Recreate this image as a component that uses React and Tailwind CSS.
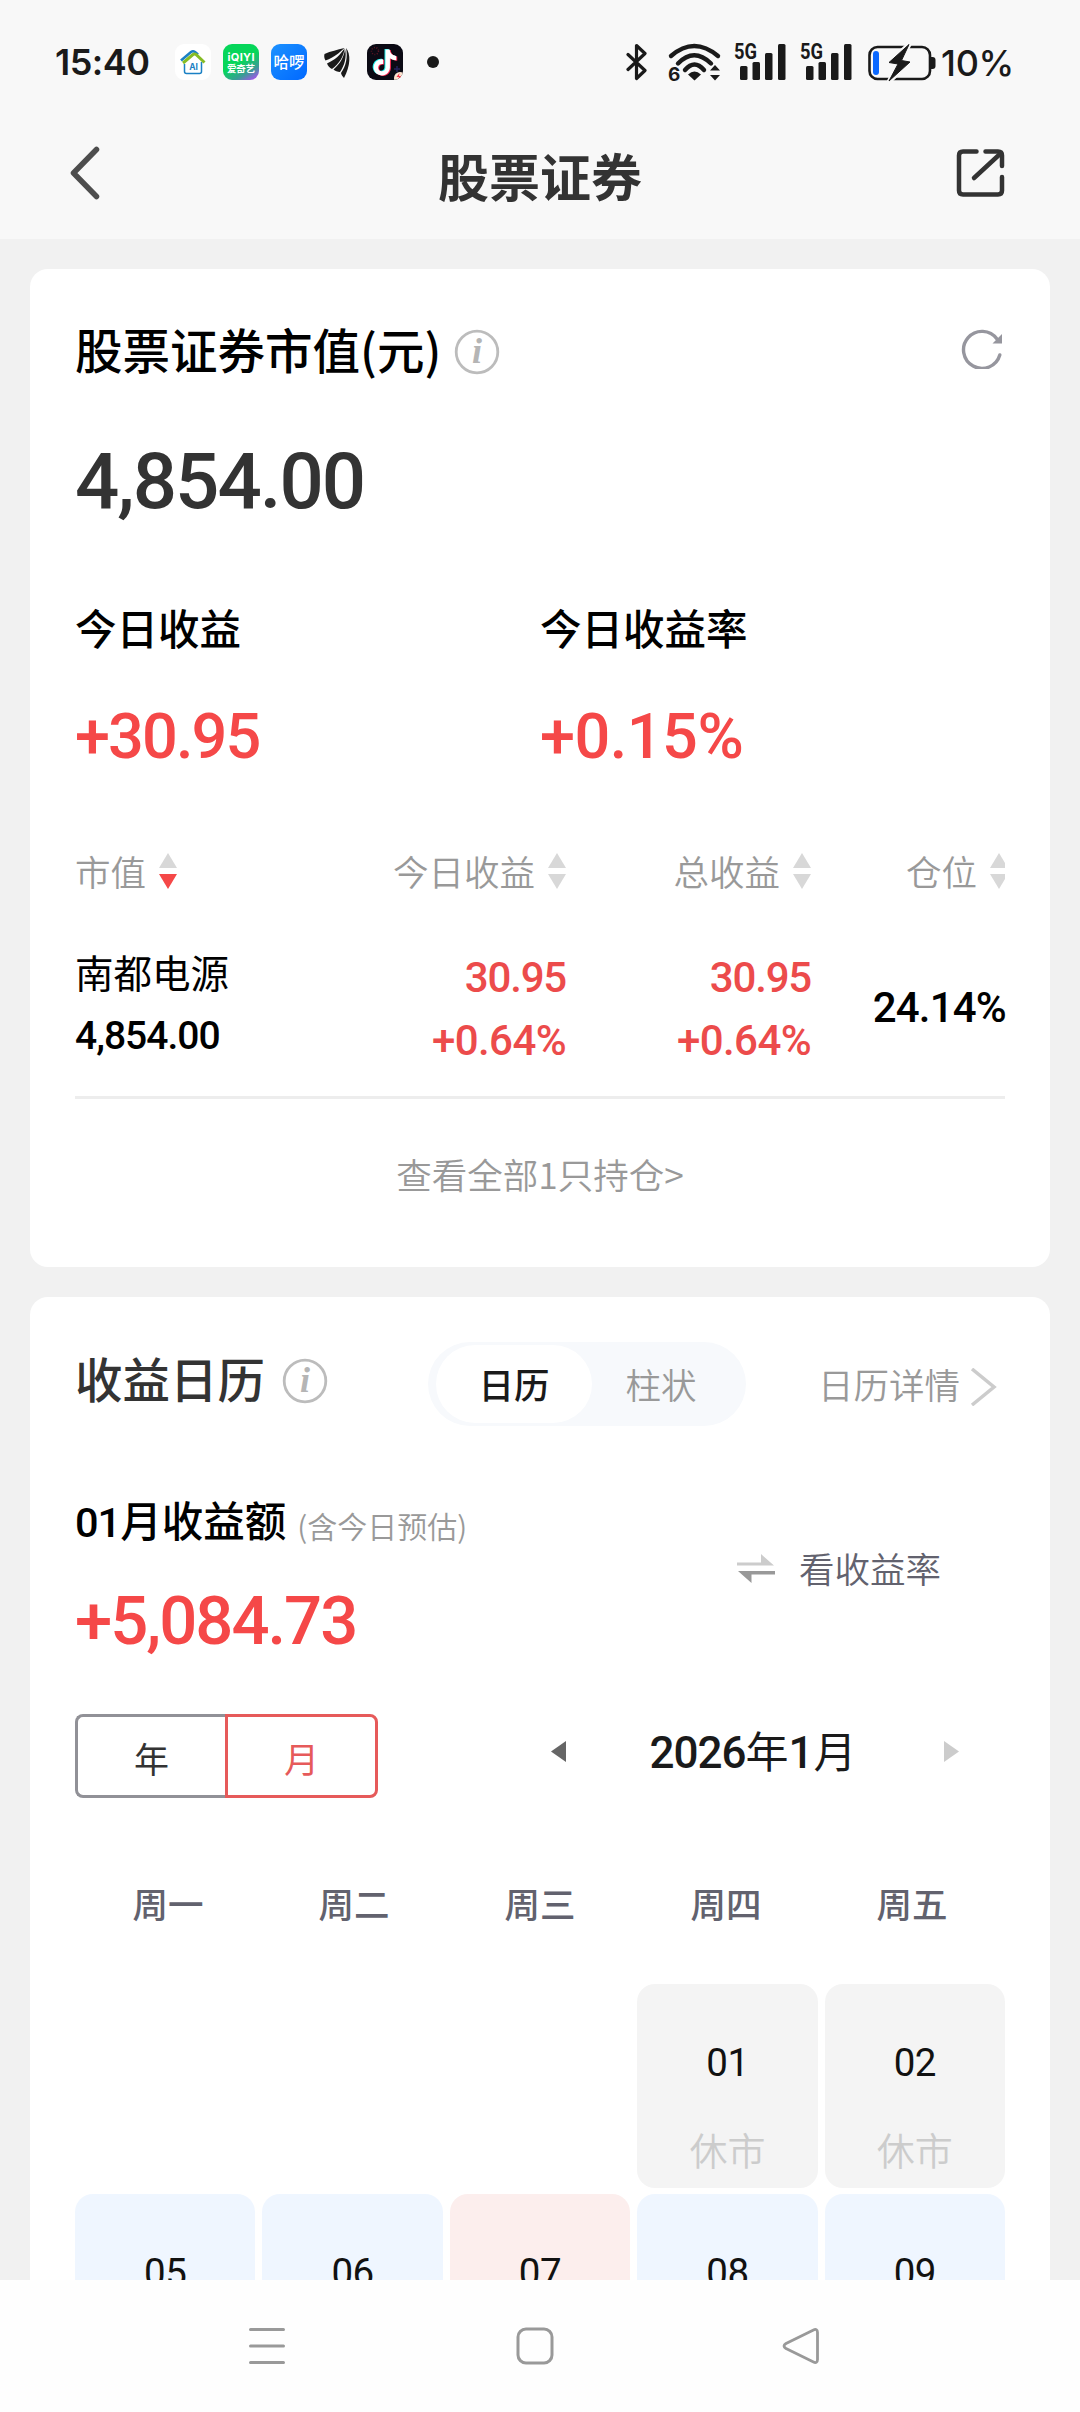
import React, { useState } from 'react';

const weekdays = ['周一', '周二', '周三', '周四', '周五'];

const days = [
  { day: null },
  { day: null },
  { day: null },
  { day: '01', type: 'closed' },
  { day: '02', type: 'closed' },
  { day: '05', type: 'loss' },
  { day: '06', type: 'loss' },
  { day: '07', type: 'gain' },
  { day: '08', type: 'loss' },
  { day: '09', type: 'loss' },
];

const dayColors = {
  closed: 'bg-[#f4f4f4]',
  loss: 'bg-[#eff6ff]',
  gain: 'bg-[#fceeed]',
};

const num = "font-['Roboto','Noto_Sans_CJK_SC',sans-serif]";

const InfoIcon = () => (
  <svg className="h-[46px] w-[46px] shrink-0 overflow-visible" viewBox="0 0 46 46">
    <circle cx="23" cy="23" r="20.8" fill="none" stroke="#bcbcbc" strokeWidth="2.8" />
    <text x="23" y="34" textAnchor="middle" fontFamily="Liberation Serif, serif" fontStyle="italic" fontWeight="bold" fontSize="36" fill="#b5b5b5">i</text>
  </svg>
);

const SortIcon = ({ active, clipped }) => (
  <div className={clipped ? 'w-[15px] overflow-hidden' : 'w-[18px]'}>
    <svg className="h-[36px] w-[18px] max-w-none" viewBox="0 0 18 36">
      <path d="M9 0l9 15H0z" fill="#d8d8d8" />
      <path d="M0 21h18L9 36z" fill={active ? '#f54848' : '#d8d8d8'} />
    </svg>
  </div>
);

const SignalIcon = () => (
  <svg className="h-[40px] w-[52px] overflow-visible" viewBox="0 0 52 40" fill="#1a1a1a">
    <text x="0" y="17" fontFamily="Roboto, sans-serif" fontWeight="bold" fontSize="22" textLength="23" lengthAdjust="spacingAndGlyphs">5G</text>
    <rect x="6" y="24" width="7.5" height="14" rx="1.5" />
    <rect x="18.5" y="20" width="7.5" height="18" rx="1.5" />
    <rect x="31" y="11" width="7.5" height="27" rx="1.5" />
    <rect x="44" y="2" width="7.5" height="36" rx="1.5" />
  </svg>
);

const TIKTOK_PATH =
  'M12.525.02c1.31-.02 2.61-.01 3.91-.02.08 1.53.63 3.09 1.75 4.17 1.12 1.11 2.7 1.62 4.24 1.79v4.03c-1.44-.05-2.89-.35-4.2-.97-.57-.26-1.1-.59-1.62-.93-.01 2.92.01 5.84-.02 8.75-.08 1.4-.54 2.79-1.35 3.94-1.31 1.92-3.58 3.17-5.91 3.21-1.43.08-2.86-.31-4.08-1.03-2.02-1.19-3.44-3.37-3.65-5.71-.02-.5-.03-1-.01-1.49.18-1.9 1.12-3.72 2.58-4.96 1.66-1.44 3.98-2.13 6.15-1.72.02 1.48-.04 2.96-.04 4.44-.99-.32-2.15-.23-3.02.37-.63.41-1.11 1.04-1.36 1.75-.21.51-.15 1.07-.14 1.61.24 1.64 1.82 3.02 3.5 2.87 1.12-.01 2.19-.66 2.77-1.61.19-.33.4-.67.41-1.06.1-1.79.06-3.57.07-5.36.01-4.03-.01-8.05.02-12.07z';

const StatusBar = () => (
  <div className="flex h-[124px] items-center justify-between pr-[66px] pl-[55px] text-[#1a1a1a]">
    <div className="flex items-center gap-3">
      <span className="w-[108px] font-['Inter',sans-serif] text-[36px] leading-none font-semibold tracking-[-0.5px]">15:40</span>

      {/* home AI */}
      <svg className="h-9 w-9 overflow-visible" viewBox="0 0 36 36">
        <rect width="36" height="36" rx="9" fill="#fff" />
        <path d="M9.5 20v7.5q0 2 2 2h13q2 0 2-2V18" fill="none" stroke="#1a80c4" strokeWidth="1.5" />
        <path d="M6 16.5L16 8q2-1.5 4 0l3 2.5" fill="none" stroke="#1a80c4" strokeWidth="2.6" />
        <path d="M8 19l10-8.5q1.5-1 3 0l8.5 8" fill="none" stroke="#86bc25" strokeWidth="3" />
        <text x="18.5" y="26" textAnchor="middle" fontFamily="Inter, sans-serif" fontWeight="bold" fontSize="8.5" fill="#1a80c4">AI</text>
      </svg>

      {/* iQIYI */}
      <svg className="h-9 w-9 overflow-visible" viewBox="0 0 36 36">
        <defs>
          <linearGradient id="iqiyi" x1="0.3" y1="0" x2="0.9" y2="1">
            <stop offset="0.45" stopColor="#06d65a" />
            <stop offset="0.75" stopColor="#3a9c96" />
            <stop offset="1" stopColor="#b04bf5" />
          </linearGradient>
        </defs>
        <rect width="36" height="36" rx="9" fill="url(#iqiyi)" />
        <text x="18" y="17" textAnchor="middle" fontFamily="Inter, sans-serif" fontWeight="bold" fontSize="11" textLength="27" fill="#fff">iQIYI</text>
        <text x="18" y="28" textAnchor="middle" fontFamily="Noto Sans CJK SC, sans-serif" fontWeight="bold" fontSize="9.5" textLength="28" fill="#fff">爱奇艺</text>
      </svg>

      {/* Hello */}
      <svg className="h-9 w-9 overflow-visible" viewBox="0 0 36 36">
        <defs>
          <linearGradient id="hello" x1="0" y1="0" x2="1" y2="1">
            <stop offset="0" stopColor="#1c92ff" />
            <stop offset="1" stopColor="#0068ff" />
          </linearGradient>
        </defs>
        <rect width="36" height="36" rx="9" fill="url(#hello)" />
        <text x="18" y="24" textAnchor="middle" fontFamily="Noto Sans CJK SC, sans-serif" fontWeight="500" fontSize="15.5" fill="#fff">哈啰</text>
      </svg>

      {/* wing */}
      <svg className="h-9 w-9" viewBox="0 0 36 36" fill="#1a1a1a">
        <path d="M5.5 10C12 7 18 6 25.500 4 20 9 16 13 6.500 16.500 5 14 5 12 5.500 10z" />
        <path d="M8 19.500C16 16 21 11 25.500 4.500 25 12 20 20 13 25 10.500 24 9 22 8 19.500z" />
        <path d="M14.500 25.500C21 20 25 13 26 5c2 7-.5 17-5 23-2.500 0-5-1-6.500-2.500z" />
        <path d="M22 29C27 22 29 13 27 4c5 6 4.500 18-2 30-1.500-1.500-2.500-3-3-5z" />
      </svg>

      {/* TikTok */}
      <svg className="h-9 w-9" viewBox="0 0 36 36">
        <defs>
          <clipPath id="tile"><rect width="36" height="36" rx="9" /></clipPath>
        </defs>
        <g clipPath="url(#tile)">
          <rect width="36" height="36" fill="#0b0a14" />
          <circle cx="8" cy="7" r="3.5" fill="none" stroke="#5c1523" strokeWidth="1.5" strokeDasharray="1 1.5" />
          <path d="M27 25h6M30 22v6" stroke="#25235c" strokeWidth="1.5" />
          <path d={TIKTOK_PATH} transform="translate(4 5) scale(1.08)" fill="#25f4ee" />
          <path d={TIKTOK_PATH} transform="translate(6 6) scale(1.08)" fill="#fe2c55" />
          <path d={TIKTOK_PATH} transform="translate(5 5.5) scale(1.08)" fill="#fff" />
          <circle cx="33" cy="34" r="6" fill="#ffe3cf" />
          <path d="M32.5 29l-3 4h2.500l-1 3 3.500-4h-2.500z" fill="#f3364a" />
        </g>
      </svg>

      <span className="ml-3 h-3 w-3 rounded-full bg-[#1a1a1a]" />
    </div>

    <div className="flex items-center">
      <svg className="h-[40px] w-[22px]" viewBox="0 0 22 40" fill="none" stroke="#1a1a1a" strokeWidth="3.2" strokeLinejoin="round" strokeLinecap="round">
        <path d="M2 12.5L19 28.500 10.500 36.500V3.500L19 11.500 2 27.500" />
      </svg>

      <svg className="ml-[20px] h-[40px] w-[54px] overflow-visible" viewBox="0 0 54 40" fill="none" stroke="#1a1a1a" strokeWidth="4.4">
        <path d="M3 14Q26-6 50 14" strokeLinecap="round" />
        <path d="M10 21.5Q26 5 43 21.500" strokeLinecap="round" />
        <path d="M17 28Q26.500 17 36 28" strokeLinecap="round" />
        <path d="M20 32.500q6.500-6 13 0L26.500 38.500z" fill="#1a1a1a" stroke="none" />
        <path d="M42 28.500L47 23l5 5.500zM42 33h10l-5 5.500z" fill="#1a1a1a" stroke="none" />
        <text x="0" y="38.5" fontFamily="Inter, sans-serif" fontWeight="bold" fontSize="19" fill="#1a1a1a" stroke="none">6</text>
      </svg>

      <div className="ml-[12px] flex gap-[14px]">
        <SignalIcon />
        <SignalIcon />
      </div>

      <svg className="ml-[16px] h-[40px] w-[68px]" viewBox="0 0 68 40">
        <rect x="1.5" y="5" width="60.5" height="32" rx="8" fill="none" stroke="#1a1a1a" strokeWidth="2.6" />
        <path d="M63 15h1.500q3 0 3 3v6q0 3-3 3H63z" fill="#1a1a1a" />
        <rect x="5" y="9" width="6" height="24" rx="3" fill="#0a68ff" />
        <path d="M41 2.500L21 21h9.500l-9 18L41 20.500h-9z" fill="none" stroke="#f8f8f8" strokeWidth="5" strokeLinejoin="round" />
        <path d="M41 2.500L21 20.500l9 1.500-9 17L42 20l-8.500-1.500z" fill="#1a1a1a" stroke="#1a1a1a" strokeWidth="1" />
      </svg>

      <span className="ml-[5px] w-[73px] pt-px font-['Inter',sans-serif] text-[36px] leading-none font-medium tracking-[-0.3px]">10%</span>
    </div>
  </div>
);

const Header = () => (
  <header className="h-[239px] shrink-0 bg-[#f8f8f8]">
    <StatusBar />
    <div className="flex h-[98px] items-center justify-between pr-[74px] pl-[68px]">
      <svg className="h-[56px] w-[52px]" viewBox="0 0 52 56" fill="none" stroke="#4d4d4d" strokeWidth="5.5" strokeLinecap="round" strokeLinejoin="round">
        <path d="M28.5 4.500L5.500 28l23 23.500" />
      </svg>
      <h1 className="pt-1 pl-[6px] text-[51px] leading-none font-bold text-[#333]">股票证券</h1>
      <svg className="h-[52px] w-[52px]" viewBox="0 0 52 52" fill="none" stroke="#333" strokeWidth="4.500" strokeLinecap="round" strokeLinejoin="round">
        <path d="M22.5 4.500H9q-4 0-4 4v35q0 4 4 4h35q4 0 4-4V30" />
        <path d="M31.5 4.500h12.500q4 0 4 4V19" />
        <path d="M20 31L46 7" />
      </svg>
    </div>
  </header>
);

const HoldingsCard = () => (
  <section className="h-[998px] shrink-0 rounded-[18px] bg-white px-[45px]">
    <div className="flex h-[156px] items-center">
      <h2 className="pt-[3px] text-[47.5px] leading-none font-medium text-black">股票证券市值(元)</h2>
      <div className="ml-[13px] pt-[10px]">
        <InfoIcon />
      </div>
      <svg className="ml-auto h-[44px] w-[44px]" viewBox="0 0 44 44" fill="none">
        <path d="M38.800 30A18.500 18.500 0 1 1 36 14" stroke="#96969e" strokeWidth="3.400" strokeLinecap="round" />
        <path d="M41 9v9.500h-9.500z" fill="#96969e" />
      </svg>
    </div>

    <div className={`${num} flex h-[110px] items-center pt-[3px] text-[78px] font-medium tracking-[-2px] text-[#333]`}>4,854.00</div>

    <div className="mt-[62px] grid grid-cols-2 text-[41.5px] leading-[60px] font-medium text-black">
      <span>今日收益</span>
      <span>今日收益率</span>
    </div>
    <div className={`${num} mt-[39px] mb-[-1px] grid grid-cols-2 text-[63px] leading-[82px] font-medium text-[#f54848]`}>
      <span className="tracking-[-1.9px]">+30.95</span>
      <span className="tracking-[-0.5px]">+0.15%</span>
    </div>

    <div className="mt-[69px] grid h-[50px] grid-cols-[245px_246px_245px_194px] items-center text-[35.5px] leading-none font-[350] text-[#999]">
      <div className="flex items-center gap-[13px]">市值<SortIcon active /></div>
      <div className="flex items-center justify-end gap-[13px]">今日收益<SortIcon /></div>
      <div className="flex items-center justify-end gap-[13px]">总收益<SortIcon /></div>
      <div className="flex items-center justify-end gap-[13px]">仓位<SortIcon clipped /></div>
    </div>

    <div className="grid h-[203px] grid-cols-[245px_246px_245px_195px] border-b-[3px] border-[#ededed]">
      <div className="flex flex-col pt-[44px] text-black">
        <span className="text-[38.5px] leading-[62px]">南都电源</span>
        <span className={`${num} text-[39px] leading-[69px] font-medium tracking-[-1px]`}>4,854.00</span>
      </div>
      <div className={`${num} flex flex-col pt-[50px] text-right text-[42px] leading-[63px] font-medium text-[#ec4b4b]`}>
        <span className="tracking-[-1.2px]">30.95</span>
        <span className="tracking-[-0.6px]">+0.64%</span>
      </div>
      <div className={`${num} flex flex-col pt-[50px] text-right text-[42px] leading-[63px] font-medium text-[#ec4b4b]`}>
        <span className="tracking-[-1.2px]">30.95</span>
        <span className="tracking-[-0.6px]">+0.64%</span>
      </div>
      <div className={`${num} pt-[81px] text-right text-[42px] leading-[62px] font-medium tracking-[-0.8px] text-black`}>24.14%</div>
    </div>

    <div className="pt-px text-center text-[35.5px] leading-[148px] font-[350] text-[#999]">查看全部1只持仓&gt;</div>
  </section>
);

const CalendarCard = () => {
  const [view, setView] = useState('calendar');
  const [period, setPeriod] = useState('month');

  return (
    <section className="grow rounded-t-[18px] bg-white px-[45px] pt-[45px]">
      <div className="flex h-[84px] items-center">
        <div className="flex w-[353px] items-center">
          <h2 className="pb-[13px] text-[47.5px] leading-none font-medium text-[#333]">收益日历</h2>
          <div className="ml-[17px] pb-[6px]">
            <InfoIcon />
          </div>
        </div>
        <div className="flex h-[84px] w-[318px] rounded-full bg-[#f7f9fc] py-[3px] pl-[8px] text-[35.500px] leading-none">
          <button
            onClick={() => setView('calendar')}
            className={view === 'calendar' ? 'w-[156px] rounded-full bg-white font-medium text-[#1a1a1a]' : 'w-[156px] text-[#999]'}
          >
            日历
          </button>
          <button
            onClick={() => setView('bar')}
            className={view === 'bar' ? 'w-[138px] rounded-full bg-white font-medium text-[#1a1a1a]' : 'w-[138px] font-[350] text-[#999]'}
          >
            柱状
          </button>
        </div>
        <div className="mr-[8px] ml-auto flex items-center gap-[10px] text-[35.5px] leading-none font-[350] text-[#999]">
          日历详情
          <svg className="mt-[6px] h-[38px] w-[27px]" viewBox="0 0 27 38" fill="none" stroke="#ccc" strokeWidth="3.5">
            <path d="M2 1l22 18L2 37" />
          </svg>
        </div>
      </div>

      <div className="mt-[65px] flex items-center justify-between">
        <div>
          <div className="flex h-[60px] items-center gap-[11px]">
            <span className="text-[41.5px] leading-[60px] font-medium text-black">
              <span className={`${num} tracking-[-1px]`}>01</span>月收益额
            </span>
            <span className="pt-[8px] text-[30px] leading-none font-[350] text-[#999]">(含今日预估)</span>
          </div>
          <div className={`${num} mt-[35px] text-[67px] leading-[70px] font-medium tracking-[-2px] text-[#f54848]`}>+5,084.73</div>
        </div>
        <div className="mr-[64px] flex items-center gap-[24px] pb-[11px] text-[35.5px] leading-none font-[350] text-[#62626e]">
          <svg className="h-[29px] w-[38px]" viewBox="0 0 38 29">
            <path d="M0 8.500h24V0l13 11.500H0z" fill="#ccc" />
            <path d="M38 20.500H14.500V29L1 17h37z" fill="#999" />
          </svg>
          看收益率
        </div>
      </div>

      <div className="mt-[58px] flex h-[84px]">
        <button
          onClick={() => setPeriod('year')}
          className={`w-[150px] rounded-l-[8px] border-[3px] border-r-0 pt-[2px] text-[35px] leading-none ${period === 'year' ? 'border-[#e65a5a] text-[#e65a5a]' : 'border-[#919197] text-[#333]'}`}
        >
          年
        </button>
        <button
          onClick={() => setPeriod('month')}
          className={`w-[153px] rounded-r-[8px] border-[3px] pt-[2px] text-[35px] leading-none ${period === 'month' ? 'border-[#e65a5a] text-[#e65a5a]' : 'border-[#919197] text-[#333]'}`}
        >
          月
        </button>
        <div className="ml-[173px] flex w-[408px] items-center justify-between pb-[10px]">
          <svg className="h-[21px] w-[15px]" viewBox="0 0 15 21"><path d="M15 0v21L0 10.500z" fill="#666" /></svg>
          <span className="mr-[4px] text-[43px] leading-none text-[#1a1a1a]">
            <span className={`${num} text-[44px] font-medium tracking-[-1px]`}>2026</span>年<span className={`${num} text-[44px] font-medium`}>1</span>月
          </span>
          <svg className="h-[21px] w-[15px]" viewBox="0 0 15 21"><path d="M0 0v21l15-10.500z" fill="#ccc" /></svg>
        </div>
      </div>

      <div className="mt-[80px] grid grid-cols-5 text-center text-[35.5px] leading-[50px] font-medium text-[#62626e]">
        {weekdays.map((name) => (
          <span key={name}>{name}</span>
        ))}
      </div>

      <div className="mt-[56px] grid grid-cols-5 gap-x-[7px] gap-y-[6px]">
        {days.map((item, i) => (
          <div key={i} className={`h-[204px] rounded-[18px] pt-[54px] text-center ${item.day ? dayColors[item.type] : ''}`}>
            {item.day && <div className={`${num} text-[38.5px] leading-[50px] tracking-[-0.5px] text-[#111]`}>{item.day}</div>}
            {item.type === 'closed' && <div className="mt-[36px] text-[38px] leading-[50px] font-[350] text-[#ccc]">休市</div>}
          </div>
        ))}
      </div>
    </section>
  );
};

const NavBar = () => (
  <nav className="flex h-[132px] shrink-0 items-center justify-between bg-[#fefefe] px-[248px]">
    <svg className="h-[38px] w-[38px]" viewBox="0 0 38 38" stroke="#999" strokeWidth="3" strokeLinecap="round">
      <path d="M2.500 2.500h33M2.500 19h33M2.500 35.500h33" />
    </svg>
    <svg className="ml-[2px] h-[38px] w-[38px]" viewBox="0 0 38 38" fill="none" stroke="#999" strokeWidth="3">
      <rect x="2" y="2" width="34" height="34" rx="8" />
    </svg>
    <svg className="mr-[12px] h-[38px] w-[38px]" viewBox="0 0 38 38" fill="none" stroke="#999" strokeWidth="2.8" strokeLinejoin="round">
      <path d="M31 3.200Q35.500 1 35.500 5.500v27q0 4.500-4.500 2.300L4 21.500Q0 19 4 16.500z" />
    </svg>
  </nav>
);

export default function App() {
  return (
    <div className="flex h-[2412px] w-[1080px] flex-col overflow-hidden bg-[#f1f1f1] font-['Noto_Sans_CJK_SC',sans-serif]">
      <Header />
      <main className="flex h-[2041px] flex-col gap-[30px] overflow-hidden px-[30px] pt-[30px]">
        <HoldingsCard />
        <CalendarCard />
      </main>
      <NavBar />
    </div>
  );
}
